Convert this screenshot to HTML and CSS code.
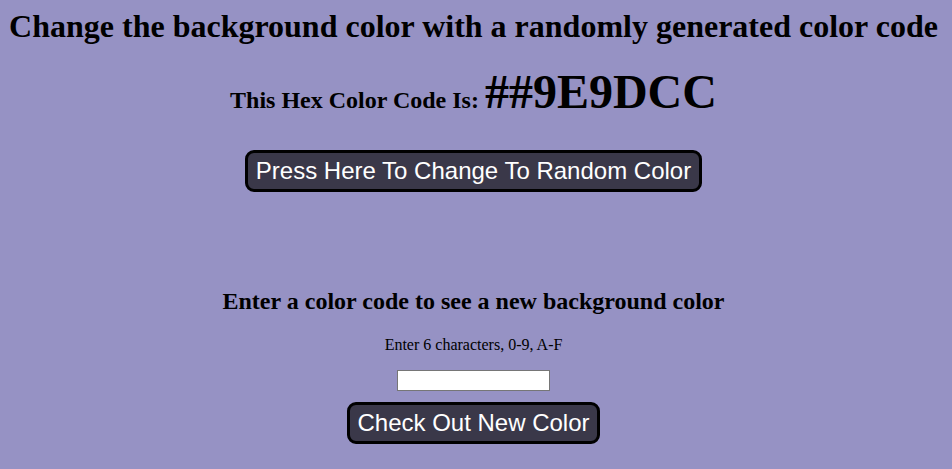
FILE: index.html
```html
<!DOCTYPE html>
<html>
<head>
<meta charset="utf-8">
<link rel="stylesheet" href="styles.css">
</head>
<body>
<div class="page">
  <h1 class="title">Change the background color with a randomly generated color code</h1>
  <div class="hexline"><span class="hexlabel">This Hex Color Code Is: </span><span class="hexcode">##9E9DCC</span></div>
  <button class="btn btn-random">Press Here To Change To Random Color</button>
  <h2 class="subtitle">Enter a color code to see a new background color</h2>
  <p class="hint">Enter 6 characters, 0-9, A-F</p>
  <input class="code-input" type="text">
  <button class="btn btn-check">Check Out New Color</button>
</div>
</body>
</html>
```
FILE: styles.css
```css
html, body {
  margin: 0;
  padding: 0;
  background: #9692c4;
  font-family: "Liberation Serif", "Times New Roman", serif;
  color: #000;
}
.page {
  display: flex;
  flex-direction: column;
  align-items: center;
  text-align: center;
  padding-right: 5px;
}
.title {
  font-size: 32px;
  font-weight: bold;
  margin: 7px 0 0;
  line-height: 38px;
}
.hexline {
  margin-top: 19px;
  font-weight: bold;
  line-height: 56px;
}
.hexlabel {
  font-size: 24px;
}
.hexcode {
  font-size: 48px;
}
.btn {
  background: #3a3849;
  color: #fff;
  border: 3px solid #000;
  border-radius: 9px;
  font-family: "Liberation Sans", Arial, sans-serif;
  font-size: 24px;
  padding: 4px 8px;
  line-height: 28px;
}
.btn-random {
  margin-top: 19px;
}
.subtitle {
  font-size: 24px;
  font-weight: bold;
  margin: 95px 0 0;
  line-height: 28px;
}
.hint {
  font-size: 16px;
  margin: 20px 0 0;
  line-height: 20px;
}
.code-input {
  margin-top: 15px;
  width: 147px;
  height: 17px;
  padding: 1px 2px;
  border: 1px solid #767676;
  background: #fff;
  box-sizing: content-box;
}
.btn-check {
  margin-top: 11px;
  padding: 4px 7px;
}
```
